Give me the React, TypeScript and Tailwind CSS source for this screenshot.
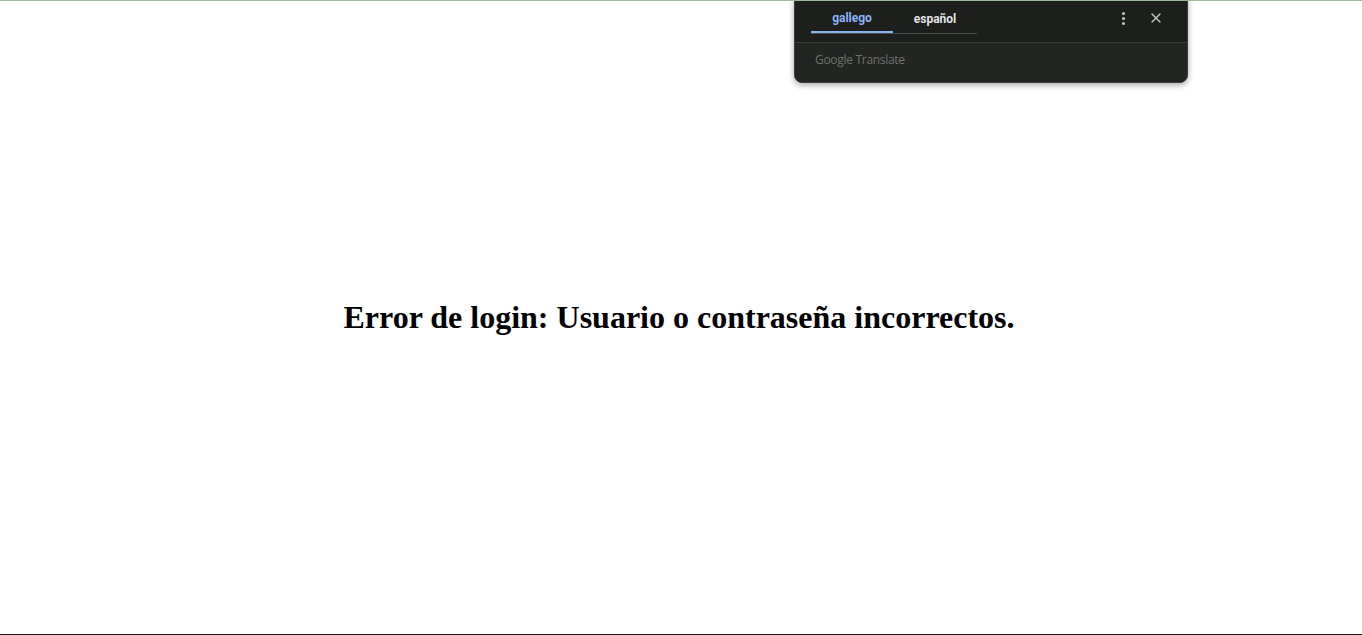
import { X } from 'lucide-react';

function TranslateBar() {
  return (
    <div className="absolute left-[794px] top-[-8px] w-[394px] rounded-lg bg-[#1c1f1b] shadow-[0_2px_6px_rgba(0,0,0,0.35)] border border-[#3a3d39] overflow-hidden font-['Roboto',sans-serif]">
      <div className="h-[48px] flex items-end pl-4 pr-[23px] pb-[8px]">
        <div className="flex border-b border-[#4a4d49] w-[166px]">
          <div className="w-[82px] h-[28px] flex items-center justify-center text-[12px] font-bold text-[#8ab4f8] border-b-2 border-[#8ab4f8] -mb-px">
            gallego
          </div>
          <div className="w-[84px] h-[28px] flex items-center justify-center text-[12px] font-bold text-[#e3e3e3]">
            español
          </div>
        </div>
        <div className="flex-1" />
        <div className="flex items-center gap-[23px] h-[28px] mb-[2px]">
          <div className="flex flex-col gap-[2px] items-center">
            <span className="w-[3px] h-[3px] rounded-full bg-[#c4c7c5]" />
            <span className="w-[3px] h-[3px] rounded-full bg-[#c4c7c5]" />
            <span className="w-[3px] h-[3px] rounded-full bg-[#c4c7c5]" />
          </div>
          <X className="w-[16px] h-[16px] text-[#c4c7c5]" strokeWidth={2} />
        </div>
      </div>
      <div className="h-[40px] bg-[#222521] border-t border-[#3a3d39] flex items-center pl-[20px] pb-[5px]">
        <span className="text-[12px] text-[#6f726f] font-['Open_Sans',sans-serif] tracking-[-0.3px]">Google Translate</span>
      </div>
    </div>
  );
}

export default function App() {
  return (
    <div className="relative w-[1362px] h-[635px] bg-white overflow-hidden border-t border-[#9fb89f] border-b border-b-[#1c1f1b]">
      <div className="h-full flex items-center justify-center pb-[2px]">
        <h1 className="text-[32px] font-bold text-black font-['Liberation_Serif',serif] pr-[4px]">
          Error de login: Usuario o contraseña incorrectos.
        </h1>
      </div>
      <TranslateBar />
    </div>
  );
}
